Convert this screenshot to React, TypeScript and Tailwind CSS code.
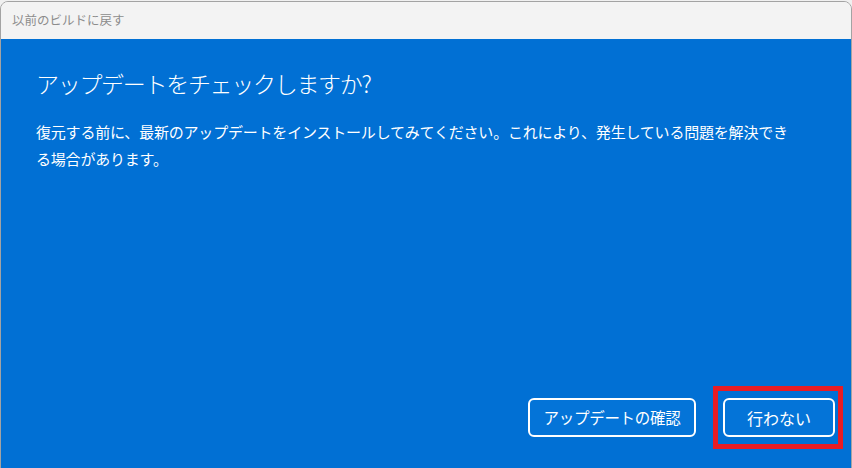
const jp = { fontFamily: '"Noto Sans CJK JP", "Noto Sans", sans-serif' };

const DialogButton = ({ text, width, size }: { text: string; width: string; size: string }) => {
  return (
    <button
      className={`h-[39px] ${width} ${size} rounded-[6px] border-2 border-white bg-[#0474d8] text-white`}
      style={jp}
    >
      {text}
    </button>
  );
};

export default function App() {
  return (
    <div className="w-[852px] h-[468px] bg-[#f0f0f0] pt-px overflow-hidden" style={jp}>
      <div className="flex flex-col h-[476px] rounded-[8px] border border-[#a3a3a3] overflow-hidden">
        <div className="h-[37px] shrink-0 bg-[#f3f3f3] flex items-center pl-[11px]">
          <span className="text-[12.5px] text-[#8c8c8c]">以前のビルドに戻す</span>
        </div>

        <div className="flex flex-col flex-1 bg-[#0170d4] text-white pl-[35px] pr-[16px]">
          <h1 className="mt-[27px] text-[23px] leading-[34px] font-light tracking-[-1.3px]">
            アップデートをチェックしますか?
          </h1>

          <p className="mt-[18px] text-[15px] leading-[27px] tracking-[-0.2px]">
            復元する前に、最新のアップデートをインストールしてみてください。これにより、発生している問題を解決でき
            <br />
            る場合があります。
          </p>

          <div className="flex justify-end gap-[27px] mt-auto mb-[39px]">
            <DialogButton text="アップデートの確認" width="w-[168px]" size="text-[15.5px] tracking-[-0.3px]" />
            <div className="relative">
              <DialogButton text="行わない" width="w-[112px]" size="text-[16px]" />
              <span className="absolute -top-[12px] -bottom-[12px] -left-[10px] -right-[8px] border-[5px] border-[#e81c24] pointer-events-none" />
            </div>
          </div>
        </div>
      </div>
    </div>
  );
}
